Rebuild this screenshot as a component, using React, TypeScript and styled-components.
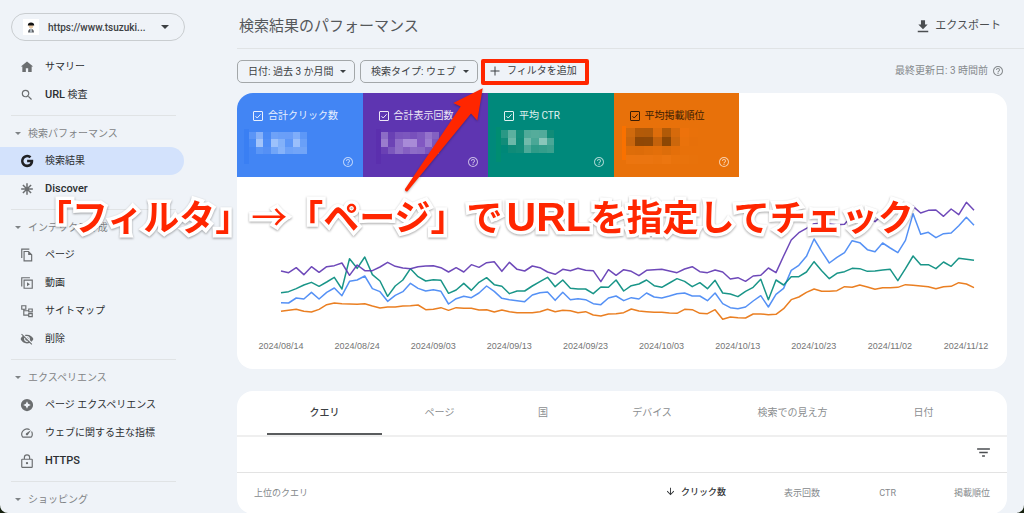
import React from "react";
import styled, { createGlobalStyle } from "styled-components";

const GlobalStyle = createGlobalStyle`
  * { box-sizing: border-box; }
  body {
    margin: 0;
    background: #16210f;
    font-family: Roboto, "Noto Sans CJK JP", sans-serif;
    font-size: 10px;
    line-height: 16px;
    color: #3c4043;
  }
  button { font: inherit; color: inherit; background: none; border: 0; padding: 0; cursor: pointer; }
  a { color: inherit; text-decoration: none; }
  svg { display: block; flex: none; }
`;

const Shell = styled.div`
  position: relative;
  display: flex;
  height: 100vh;
  overflow: hidden;
  background: #eff3f8;
  border-radius: 0 0 8px 8px;
`;

/* ---------- sidebar ---------- */

const Sidebar = styled.nav`
  flex: none;
  width: 237px;
  padding-top: 13px;
`;

const PropertyButton = styled.button`
  display: flex;
  align-items: center;
  width: 174px;
  height: 28px;
  margin: 0 0 12px 11px;
  padding: 0 15px 0 11px;
  border: 1px solid #c9cdd0;
  border-radius: 14px;
  font-weight: 500;
`;

const PropertyName = styled.span`
  flex: 1;
  margin-left: 9px;
  padding-top: 1px;
  text-align: left;
  white-space: nowrap;
`;

const Caret = styled.span<{ $size?: number }>`
  flex: none;
  border: solid transparent;
  border-width: ${(p) => p.$size ?? 3}px ${(p) => p.$size ?? 3}px 0;
  border-top-color: currentColor;
`;

const NavList = styled.ul`
  list-style: none;
  margin: 0;
  padding: 0;
`;

const NavLink = styled.a<{ $active?: boolean }>`
  display: flex;
  align-items: center;
  gap: 11px;
  width: 184px;
  height: 28px;
  padding-left: 20px;
  border-radius: 0 14px 14px 0;
  background: ${(p) => (p.$active ? "#d3e2fc" : "transparent")};
  color: #2b2e31;
  white-space: nowrap;
  svg { color: ${(p) => (p.$active ? "#202124" : "#6b6e70")}; }
`;

const Latin = styled.span`
  font-size: 11px;
  font-weight: 500;
`;

const NavSection = styled.section`
  margin-top: 6px;
`;

const NavDivider = styled.hr`
  width: 165px;
  margin: 0 0 3px 11px;
  border: 0;
  border-top: 1px solid #e0e3e5;
`;

const NavHeading = styled.button`
  display: flex;
  align-items: center;
  gap: 7px;
  height: 28px;
  padding: 1px 0 0 15px;
  color: #7f8386;
`;

/* ---------- main column ---------- */

const Main = styled.main`
  flex: 1;
  min-width: 0;
  display: flex;
  flex-direction: column;
`;

const Header = styled.header`
  flex: none;
  display: flex;
  align-items: center;
  justify-content: space-between;
  height: 49px;
  padding: 4px 23px 0 2px;
  border-bottom: 1px solid #e0e3e5;
`;

const Title = styled.h1`
  margin: 0;
  font-size: 15px;
  line-height: 24px;
  font-weight: 400;
  color: #55585b;
`;

const ExportButton = styled.button`
  display: flex;
  align-items: center;
  gap: 5px;
  font-size: 11px;
  color: #4b4e51;
`;

const Content = styled.div`
  flex: 1;
  min-height: 0;
  padding-right: 17px;
`;

const FilterBar = styled.div`
  display: flex;
  align-items: center;
  gap: 5px;
  height: 44px;
`;

const Chip = styled.button`
  display: flex;
  align-items: center;
  justify-content: space-between;
  width: 118px;
  height: 23px;
  padding: 1px 8px 0 10px;
  border: 1px solid #a3a7a9;
  border-radius: 5px;
  white-space: nowrap;
`;

const AddFilter = styled.div`
  position: relative;
  padding-left: 6px;
`;

const AddFilterButton = styled.button`
  display: flex;
  align-items: center;
  gap: 6px;
  height: 23px;
`;

const Highlight = styled.span`
  position: absolute;
  top: -1px;
  left: -2px;
  width: 108px;
  height: 26px;
  border: 4px solid #ff2600;
  border-radius: 2px;
  pointer-events: none;
`;

const PointerArrow = styled.svg`
  position: absolute;
  top: 23px;
  left: -83px;
  z-index: 2;
  pointer-events: none;
  filter: drop-shadow(0 1px 1px rgba(0, 0, 0, 0.3));
`;

const Updated = styled.div`
  display: flex;
  align-items: center;
  gap: 4px;
  margin: 0 3px 0 auto;
  color: #85898c;
`;

const Card = styled.section`
  background: #fff;
  border-radius: 16px;
  overflow: hidden;
`;

const ChartCard = styled(Card)`
  height: 276px;
  margin-bottom: 22px;
`;

const Metrics = styled.div`
  display: grid;
  grid-template-columns: repeat(4, 1fr);
  width: 502px;
`;

const Metric = styled.div<{ $color: string; $ink: string }>`
  display: flex;
  flex-direction: column;
  height: 84px;
  padding: 14px 9px 9px 16px;
  background: ${(p) => p.$color};
  color: ${(p) => p.$ink};
`;

const MetricLabel = styled.label`
  display: flex;
  align-items: center;
  gap: 5px;
  padding-top: 1px;
  white-space: nowrap;
`;

const CheckWrap = styled.span`
  display: grid;
  width: 10px;
  height: 10px;
  > * { grid-area: 1 / 1; }
`;

const Check = styled.input`
  appearance: none;
  width: 10px;
  height: 10px;
  margin: 0;
  border: 1px solid currentColor;
  border-radius: 1px;
  color: inherit;
`;

const MetricBody = styled.div`
  display: flex;
  align-items: flex-end;
  flex: 1;
  min-height: 0;
`;

const MetricHelp = styled.span`
  margin-left: auto;
  color: rgba(255, 255, 255, 0.65);
`;

const Mosaic = styled.svg`
  align-self: flex-start;
  margin: 2px 0 0 -9px;
`;

const Plot = styled.svg`
  width: calc(100% - 77px);
  height: 130px;
  margin: 20px 33px 0 44px;
  overflow: visible;
`;

const Dates = styled.div`
  display: flex;
  justify-content: space-between;
  margin: 11px 19px 0 22px;
  font-family: "Liberation Sans", sans-serif;
  font-size: 9px;
  color: #757575;
`;

const DateLabel = styled.span`
  width: 44px;
  display: flex;
  justify-content: center;
  white-space: nowrap;
`;

/* ---------- table card ---------- */

const Tabs = styled.div`
  display: grid;
  grid-template-columns: 115fr 115fr 92fr 126fr 155fr 107fr;
  height: 46px;
  padding: 0 30px;
  border-bottom: 2px solid #efefef;
`;

const Tab = styled.button<{ $active?: boolean }>`
  padding-top: 2px;
  border-bottom: 2px solid ${(p) => (p.$active ? "#5a5c5e" : "transparent")};
  color: ${(p) => (p.$active ? "#3c4043" : "#8b8e90")};
  font-weight: ${(p) => (p.$active ? 500 : 400)};
`;

const Tools = styled.div`
  display: flex;
  justify-content: flex-end;
  align-items: flex-start;
  height: 36px;
  padding: 7px 15px 0;
  border-bottom: 1px solid #e3e3e3;
  color: #4b4e51;
`;

const Table = styled.table`
  width: 100%;
  border-collapse: collapse;
  font-size: 9px;
`;

const Th = styled.th<{ $w?: number; $active?: boolean; $left?: boolean }>`
  width: ${(p) => (p.$w ? `${p.$w}px` : "auto")};
  height: 40px;
  padding: ${(p) => (p.$left ? "0 0 0 17px" : "0 17px 0 0")};
  border-bottom: 1px solid #e3e3e3;
  text-align: ${(p) => (p.$left ? "left" : "right")};
  font-weight: ${(p) => (p.$active ? 500 : 400)};
  color: ${(p) => (p.$active ? "#303336" : "#85898c")};
  white-space: nowrap;
`;

const SortLabel = styled.span`
  display: inline-flex;
  align-items: center;
  gap: 5px;
`;

/* ---------- caption laid over the page ---------- */

const Caption = styled.p`
  position: absolute;
  top: 188px;
  left: 36px;
  z-index: 3;
  margin: 0;
  display: flex;
  align-items: baseline;
  font-family: "Noto Sans CJK JP", sans-serif;
  font-size: 36px;
  line-height: 54px;
  font-weight: 700;
  white-space: nowrap;
  color: #ff2600;
  -webkit-text-stroke: 7px #fff;
  paint-order: stroke fill;
  filter: drop-shadow(0 1px 1px rgba(0, 0, 0, 0.35));
  pointer-events: none;
`;

const ThinArrow = styled.span`
  font-weight: 400;
`;

const CaptionLatin = styled.span`
  margin-left: 4px;
  font-family: "Liberation Sans", sans-serif;
  font-size: 41px;
`;

/* ---------- icons ---------- */

const Icon = ({ d, size = 14, children }: { d?: string; size?: number; children?: React.ReactNode }) => (
  <svg width={size} height={size} viewBox="0 0 24 24" fill="currentColor" aria-hidden="true">
    {d && <path d={d} />}
    {children}
  </svg>
);

const paths = {
  home: "M10 20.5v-6.500h4v6.500h6v-9.500h2.500L12 2.500 1.500 11H4v9.500z",
  search:
    "M15.500 14h-.79l-.28-.27A6.470 6.470 0 0 0 16 9.500 6.500 6.500 0 1 0 9.500 16c1.610 0 3.090-.59 4.230-1.570l.27.28v.79l5 4.990L20.490 19zm-6 0C7.010 14 5 11.990 5 9.500S7.010 5 9.500 5 14 7.010 14 9.500 11.990 14 9.500 14z",
  copy: "M16 1H2v16h2V3h12zm-1 4H6v18h15V11zm4 16H8V7h6v5h5z",
  eyeOff:
    "M12 7c2.760 0 5 2.240 5 5 0 .65-.13 1.260-.36 1.830l2.920 2.920c1.510-1.260 2.700-2.890 3.430-4.750-1.730-4.390-6-7.500-11-7.500-1.400 0-2.740.25-3.980.7l2.160 2.160C10.740 7.130 11.350 7 12 7zM2 4.270l2.740 2.740A11.804 11.804 0 0 0 1 12c1.730 4.390 6 7.500 11 7.500 1.550 0 3.030-.3 4.380-.84L19.730 22 21 20.730 3.270 3zM7.530 9.800l1.550 1.550c-.05.21-.08.43-.08.65 0 1.660 1.340 3 3 3 .22 0 .44-.03.65-.08l1.550 1.550c-.67.33-1.410.53-2.200.53-2.760 0-5-2.240-5-5 0-.79.2-1.530.53-2.200zm4.310-.78 3.150 3.150.02-.16c0-1.660-1.340-3-3-3z",
  spark:
    "M12 1.500a10.500 10.500 0 1 0 0 21 10.500 10.500 0 0 0 0-21zm0 4 2 4.500 4.500 2-4.500 2-2 4.500-2-4.500-4.500-2 4.500-2z",
  speed:
    "m20.380 8.570-1.230 1.850a8 8 0 0 1-.22 7.580H5.070A8 8 0 0 1 15.580 6.850l1.850-1.230A10 10 0 0 0 3.350 19a2 2 0 0 0 1.720 1h13.850a2 2 0 0 0 1.740-1 10 10 0 0 0-.27-10.440zm-9.790 6.840a2 2 0 0 0 2.830 0l5.660-8.490-8.490 5.660a2 2 0 0 0 0 2.830z",
  lock: "M12 17.500a2 2 0 1 0 0-4 2 2 0 0 0 0 4zM20 8h-2.500V6a5.500 5.500 0 0 0-11 0v2H4a2 2 0 0 0-2 2v12c0 1.100.9 2 2 2h16a2 2 0 0 0 2-2V10a2 2 0 0 0-2-2zM8.500 6a3.500 3.500 0 0 1 7 0v2h-7zM20 22H4V10h16z",
  help: "M11 18h2v-2h-2zm1-16a10 10 0 1 0 0 20 10 10 0 0 0 0-20zm0 18c-4.410 0-8-3.590-8-8s3.590-8 8-8 8 3.590 8 8-3.590 8-8 8zm0-14a4 4 0 0 0-4 4h2c0-1.100.9-2 2-2s2 .9 2 2c0 2-3 1.750-3 5h2c0-2.250 3-2.500 3-5a4 4 0 0 0-4-4z",
  download: "M20 9.500h-4.500V2h-7v7.500H4l8 8zM3 20v2.500h18V20z",
  filter: "M10 18h4v-2h-4zM3 6v2h18V6zm3 7h12v-2H6z",
  plus: "M21 13h-8v8h-2v-8H3v-2h8V3h2v8h8z",
  down: "m20 12-1.410-1.410L13 16.170V4h-2v12.170l-5.580-5.590L4 12l8 8z",
  google:
    "M12.200 10v4.300h5.600c-.6 2.300-2.500 3.900-5.500 3.900a6.200 6.200 0 1 1 4-10.900l3.200-3.200A10.600 10.600 0 1 0 12.300 22.600c6.200 0 10.400-4.400 10.400-10.500 0-.7-.1-1.400-.2-2.100z",
};

const VideoIcon = () => (
  <Icon>
    <path d="M2 2h15v2H4v14H2z" />
    <path d="M6 6h16v16H6zm2 2v12h12V8z" fillRule="evenodd" />
    <path d="M12 10.500v7l5-3.500z" />
  </Icon>
);

const SitemapIcon = () => (
  <Icon>
    <g fill="none" stroke="currentColor" strokeWidth="2">
      <path d="M3 3h7v6H3zM15 8.500h6v5h-6zM15 16.500h6v5h-6zM6.500 9v10H15M6.500 11.500H15" />
    </g>
  </Icon>
);

const AsteriskIcon = () => (
  <Icon>
    <path d="M12 2v20M2 12h20M5 5l14 14M19 5 5 19" stroke="currentColor" strokeWidth="2.600" />
  </Icon>
);

const Favicon = () => (
  <svg width="16" height="16" viewBox="0 0 16 16" aria-hidden="true">
    <rect width="16" height="16" fill="#fff" />
    <circle cx="8" cy="7" r="2.400" fill="#e9c9a4" />
    <path d="M4.800 6.500a3.200 3 0 0 1 6.400 0z" fill="#111" />
    <path d="M5 13.500c0-5 6-5 6 0z" fill="#5f6368" />
    <path d="M7.300 10h1.400v3.500H7.300z" fill="#c9d4dd" />
  </svg>
);

/* ---------- data ---------- */

type NavItem = { label: React.ReactNode; id: string; icon: React.ReactNode; active?: boolean };

const topItems: NavItem[] = [
  { id: "summary", label: "サマリー", icon: <Icon d={paths.home} /> },
  { id: "inspect", label: <span><Latin>URL</Latin> 検査</span>, icon: <Icon d={paths.search} /> },
];

const sections: { title: string; items: NavItem[] }[] = [
  {
    title: "検索パフォーマンス",
    items: [
      { id: "results", label: "検索結果", icon: <Icon d={paths.google} />, active: true },
      { id: "discover", label: <Latin>Discover</Latin>, icon: <AsteriskIcon /> },
    ],
  },
  {
    title: "インデックス作成",
    items: [
      { id: "pages", label: "ページ", icon: <Icon d={paths.copy} /> },
      { id: "videos", label: "動画", icon: <VideoIcon /> },
      { id: "sitemaps", label: "サイトマップ", icon: <SitemapIcon /> },
      { id: "removals", label: "削除", icon: <Icon d={paths.eyeOff} /> },
    ],
  },
  {
    title: "エクスペリエンス",
    items: [
      { id: "experience", label: "ページ エクスペリエンス", icon: <Icon d={paths.spark} /> },
      { id: "vitals", label: "ウェブに関する主な指標", icon: <Icon d={paths.speed} /> },
      { id: "https", label: <Latin>HTTPS</Latin>, icon: <Icon d={paths.lock} /> },
    ],
  },
  { title: "ショッピング", items: [] },
];

type MetricData = {
  id: string;
  label: string;
  color: string;
  ink: string;
  cell: number;
  x: number;
  y: number;
  edge: string;
  cells: string[][];
};

const metrics: MetricData[] = [
  {
    id: "clicks", label: "合計クリック数", color: "#4285f4", ink: "#e8f0fe", cell: 22, x: 14, y: 18, edge: "#3a7ff3",
    cells: [
      ["#5b95f7", "#86b0f8", "#4a8af5", "#6ea2f8", "#6a9ff8", "#6a9ef8", "#7fadfa", "#5d98f7"],
      ["#4a8bf5", "#a3c4fa", "#4f8df6", "#9cc1fb", "#83b1f9", "#5d97f7", "#9abffb", "#69a0f8"],
      ["#4385f4", "#5b96f6", "#5590f5", "#71a5f8", "#86b3fa", "#6da2f8", "#72a5f8", "#71a5f8"],
    ],
  },
  {
    id: "impressions", label: "合計表示回数", color: "#5e35b1", ink: "#ede7f6", cell: 22, x: 32, y: 18, edge: "#5b2fae",
    cells: [
      ["#8c6cc6", "#6940b4", "#7a54bd", "#7c57be", "#7850bc", "#7f5ac0", "#9473cb", "#8361c2"],
      ["#9a7ccd", "#6c43b5", "#8f6dc8", "#a88bd8", "#a88bd7", "#8158c2", "#9b7dd0", "#7c57bf"],
      ["#6a40b4", "#7b57bd", "#8f6fc7", "#855fc2", "#8d6cc7", "#8a69c5", "#7b55be", "#8b6ac5"],
    ],
  },
  {
    id: "ctr", label: "平均 CTR", color: "#00897b", ink: "#e0f2f1", cell: 23, x: 17, y: 12, edge: "#008d72",
    cells: [
      ["#2a9885", "#5cb09f", "#158e7b", "#50aa99", "#55ac9b", "#52ab9b", "#108c78"],
      ["#118c79", "#6cb8a8", "#128c79", "#72baab", "#4aa796", "#8ac6ba", "#4aa797"],
      ["#008878", "#0f8b78", "#138d7a", "#4da999", "#2f9b88", "#349d8b", "#3aa08e"],
    ],
  },
  {
    id: "position", label: "平均掲載順位", color: "#e8710a", ink: "#3a1d04", cell: 27, x: 16, y: 5, edge: "#f97100",
    cells: [
      ["#d06a0d", "#b35a08", "#b15a09", "#de6d0b", "#b15a08", "#d66a0b", "#ed720b", "#e9710a"],
      ["#c9660d", "#8f4705", "#8f4806", "#c4620b", "#8d4704", "#cc670c", "#ea720b", "#e7700a"],
      ["#de6d09", "#dd6c09", "#e06e0a", "#e36f0a", "#dd6d0a", "#e46f0a", "#e8710a", "#e8710a"],
      ["#ec750f", "#eb7510", "#eb7510", "#ea740e", "#ec7610", "#e9730c", "#e9730c", "#e8720b"],
    ],
  },
];

const series = [
  {
    color: "#e8710a",
    values: [393,390,387,393,395,387,373,368,370,371,372,370,377,383,380,380,377,376,374,388,387,382,390,382,384,384,389,388,395,389,394,397,397,397,394,387,394,390,391,397,394,404,407,401,400,397,386,392,394,396,396,398,399,387,388,399,400,388,417,410,412,413,401,401,403,402,385,358,350,336,326,333,333,331,319,321,314,320,327,322,322,321,313,315,317,319,325,319,318,307,311,322],
  },
  {
    color: "#4285f4",
    values: [367,368,353,356,336,356,336,323,346,303,299,287,325,334,363,345,334,309,324,332,328,333,371,355,348,352,338,317,333,354,358,361,364,344,337,335,360,336,358,355,358,370,373,353,347,361,352,356,338,350,353,347,340,338,347,347,361,338,370,382,385,380,362,346,380,342,324,270,255,228,176,213,248,231,217,181,187,208,214,188,203,217,180,100,162,156,172,160,158,136,111,135],
  },
  {
    color: "#00897b",
    values: [337,334,325,314,306,318,305,291,326,235,264,230,283,302,348,317,299,265,289,302,298,300,339,329,309,330,306,292,313,318,340,332,332,317,304,291,319,299,324,326,326,340,320,321,299,332,316,311,299,316,321,308,295,303,319,307,325,300,338,341,349,333,321,297,358,299,314,289,289,275,244,271,295,279,274,264,265,273,272,269,267,301,265,227,253,253,265,245,258,234,237,240],
  },
  {
    color: "#5e35b1",
    values: [272,277,262,283,259,276,259,256,248,285,254,271,271,260,246,258,263,265,259,257,256,262,275,262,275,253,261,247,244,273,246,267,272,257,262,275,282,267,271,264,270,271,304,268,285,268,273,286,270,268,267,272,277,266,259,274,277,269,275,296,292,303,287,285,263,277,227,179,157,144,130,129,131,133,132,105,100,112,124,103,97,95,85,78,98,90,89,108,86,103,66,90],
  },
];

const dates = [
  "2024/08/14", "2024/08/24", "2024/09/03", "2024/09/13", "2024/09/23",
  "2024/10/03", "2024/10/13", "2024/10/23", "2024/11/02", "2024/11/12",
];

const tabs = ["クエリ", "ページ", "国", "デバイス", "検索での見え方", "日付"];

const NavEntry = ({ item }: { item: NavItem }) => (
  <li>
    <NavLink href={`#${item.id}`} $active={item.active} aria-current={item.active ? "page" : undefined}>
      {item.icon}
      {item.label}
    </NavLink>
  </li>
);

const MetricTile = ({ m }: { m: MetricData }) => (
  <Metric $color={m.color} $ink={m.ink}>
    <MetricLabel htmlFor={m.id}>
      <CheckWrap>
        <Check id={m.id} type="checkbox" defaultChecked />
        <svg width="10" height="10" viewBox="0 0 10 10" fill="none" stroke="currentColor" aria-hidden="true">
          <path d="M2.500 5.200 4.200 7 7.600 3.300" />
        </svg>
      </CheckWrap>
      {m.label}
    </MetricLabel>
    <MetricBody>
      <Mosaic width="90" height="42" viewBox="0 0 270 126" aria-hidden="true" shapeRendering="crispEdges">
        <rect x={m.x - 14} y={m.y - 8} width="14" height="104" fill={m.edge} />
        {m.cells.map((row, r) =>
          row.map((fill, c) => (
            <rect key={`${r}-${c}`} x={m.x + c * m.cell} y={m.y + r * m.cell} width={m.cell} height={m.cell} fill={fill} />
          )),
        )}
      </Mosaic>
      <MetricHelp>
        <Icon d={paths.help} size={12} />
      </MetricHelp>
    </MetricBody>
  </Metric>
);

export default function App() {
  return (
    <>
      <GlobalStyle />
      <Shell>
        <Sidebar aria-label="メニュー">
          <PropertyButton aria-haspopup="listbox">
            <Favicon />
            <PropertyName>https://www.tsuzuki...</PropertyName>
            <Caret $size={4} />
          </PropertyButton>
          <NavList>
            {topItems.map((item) => (
              <NavEntry key={item.id} item={item} />
            ))}
          </NavList>
          {sections.map((section) => (
            <NavSection key={section.title}>
              <NavDivider />
              <NavHeading aria-expanded="true">
                <Caret />
                {section.title}
              </NavHeading>
              <NavList>
                {section.items.map((item) => (
                  <NavEntry key={item.id} item={item} />
                ))}
              </NavList>
            </NavSection>
          ))}
        </Sidebar>

        <Main>
          <Header>
            <Title>検索結果のパフォーマンス</Title>
            <ExportButton>
              <Icon d={paths.download} size={14} />
              エクスポート
            </ExportButton>
          </Header>

          <Content>
            <FilterBar>
              <Chip aria-haspopup="dialog">
                日付: 過去 3 か月間
                <Caret />
              </Chip>
              <Chip aria-haspopup="dialog">
                検索タイプ: ウェブ
                <Caret />
              </Chip>
              <AddFilter>
                <AddFilterButton>
                  <Icon d={paths.plus} size={12} />
                  フィルタを追加
                </AddFilterButton>
                <Highlight />
                <PointerArrow width="90" height="112" viewBox="0 0 90 112" aria-hidden="true">
                  <path
                    d="M82.700 5.300 53.300 20 60.700 23.500 5 106a1.800 1.800 0 0 0 2.500 2.200L71 30.500 77.300 37.500z"
                    fill="#ff2600"
                  />
                </PointerArrow>
              </AddFilter>
              <Updated>
                最終更新日: 3 時間前
                <Icon d={paths.help} size={12} />
              </Updated>
            </FilterBar>

            <ChartCard>
              <Metrics>
                {metrics.map((m) => (
                  <MetricTile key={m.id} m={m} />
                ))}
              </Metrics>
              <Plot viewBox="0 50 91 390" preserveAspectRatio="none" role="img" aria-label="検索パフォーマンスの推移">
                {series.map((s) => (
                  <polyline
                    key={s.color}
                    points={s.values.map((v, i) => `${i},${v}`).join(" ")}
                    fill="none"
                    stroke={s.color}
                    strokeOpacity="0.900"
                    strokeWidth="1.500"
                    strokeLinejoin="round"
                    vectorEffect="non-scaling-stroke"
                  />
                ))}
              </Plot>
              <Dates>
                {dates.map((d) => (
                  <DateLabel key={d}>{d}</DateLabel>
                ))}
              </Dates>
            </ChartCard>

            <Card>
              <Tabs role="tablist">
                {tabs.map((t, i) => (
                  <Tab key={t} role="tab" aria-selected={i === 0} $active={i === 0}>
                    {t}
                  </Tab>
                ))}
              </Tabs>
              <Tools>
                <button aria-label="フィルタ">
                  <Icon d={paths.filter} size={17} />
                </button>
              </Tools>
              <Table>
                <thead>
                  <tr>
                    <Th $left>上位のクエリ</Th>
                    <Th $w={94} $active>
                      <SortLabel>
                        <Icon d={paths.down} size={11} />
                        クリック数
                      </SortLabel>
                    </Th>
                    <Th $w={94}>表示回数</Th>
                    <Th $w={76}>CTR</Th>
                    <Th $w={94}>掲載順位</Th>
                  </tr>
                </thead>
              </Table>
            </Card>
          </Content>
        </Main>

        <Caption>
          「フィルタ」<ThinArrow>→</ThinArrow>「ページ」で<CaptionLatin>URL</CaptionLatin>を指定してチェック
        </Caption>
      </Shell>
    </>
  );
}
